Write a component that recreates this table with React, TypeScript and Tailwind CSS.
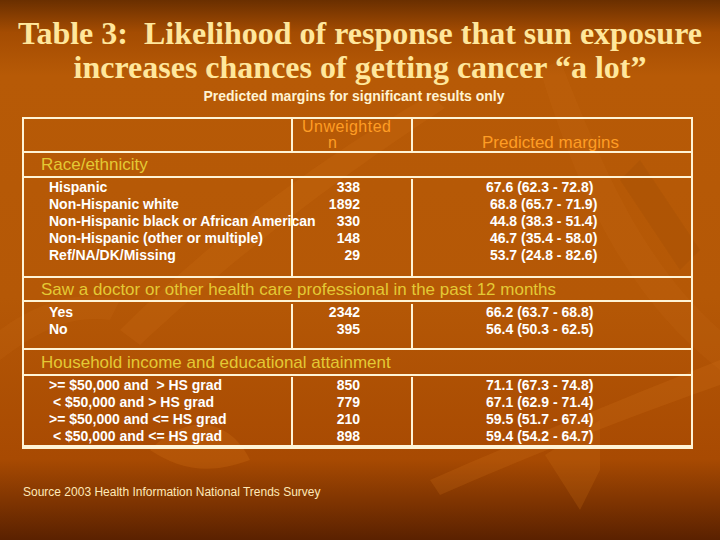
import React from 'react';

type Row = { label: string; n: string; margin: string };

const race: Row[] = [
  { label: 'Hispanic', n: '338', margin: '67.6 (62.3 - 72.8)' },
  { label: 'Non-Hispanic white', n: '1892', margin: ' 68.8 (65.7 - 71.9)' },
  { label: 'Non-Hispanic black or African American', n: '330', margin: ' 44.8 (38.3 - 51.4)' },
  { label: 'Non-Hispanic (other or multiple)', n: '148', margin: ' 46.7 (35.4 - 58.0)' },
  { label: 'Ref/NA/DK/Missing', n: '29', margin: ' 53.7 (24.8 - 82.6)' },
];

const doctor: Row[] = [
  { label: 'Yes', n: '2342', margin: '66.2 (63.7 - 68.8)' },
  { label: 'No', n: '395', margin: '56.4 (50.3 - 62.5)' },
];

const income: Row[] = [
  { label: '>= $50,000 and  > HS grad', n: '850', margin: '71.1 (67.3 - 74.8)' },
  { label: ' < $50,000 and > HS grad', n: '779', margin: '67.1 (62.9 - 71.4)' },
  { label: '>= $50,000 and <= HS grad', n: '210', margin: '59.5 (51.7 - 67.4)' },
  { label: ' < $50,000 and <= HS grad', n: '898', margin: '59.4 (54.2 - 64.7)' },
];

const Section: React.FC<{ title: string; className: string }> = ({ title, className }) => (
  <div className={`flex items-center pl-[17px] border-b-2 border-[#fff4d6] text-[17px] leading-[19px] text-[#e4c934] ${className}`}>
    {title}
  </div>
);

const DataBlock: React.FC<{ rows: Row[]; className: string }> = ({ rows, className }) => (
  <div className={`grid grid-cols-[267px_120px_1fr] border-b-2 border-[#fff4d6] text-white font-bold text-[14px] leading-[17px] ${className}`}>
    <div className="pl-[25px] whitespace-pre">
      {rows.map((r) => (
        <div key={r.label}>{r.label}</div>
      ))}
    </div>
    <div className="border-l-2 border-[#fff4d6] pr-[51px] text-right">
      {rows.map((r) => (
        <div key={r.label}>{r.n}</div>
      ))}
    </div>
    <div className="border-l-2 border-[#fff4d6] pl-[73px] whitespace-pre">
      {rows.map((r) => (
        <div key={r.label}>{r.margin}</div>
      ))}
    </div>
  </div>
);

const Backdrop: React.FC = () => (
  <svg className="absolute inset-0" width="720" height="540" viewBox="0 0 720 540">
    <path d="M120 330 C200 250 300 170 430 95 L445 108 C320 190 220 270 140 345 Z" fill="#d0721a" opacity="0.18" />
    <path d="M560 60 C600 160 640 260 720 330 L720 370 C630 300 580 200 540 70 Z" fill="#d0721a" opacity="0.14" />
    <path d="M430 480 C520 440 620 400 720 360 L720 385 C620 420 520 460 440 495 Z" fill="#d67a1c" opacity="0.2" />
    <path d="M150 450 C190 410 230 420 250 460 C210 475 180 470 150 450 Z" fill="#cc6e14" opacity="0.3" />
    <path d="M600 470 L580 510 L545 455 L600 420 Z" fill="#c86c14" opacity="0.25" />
    <path d="M620 180 L680 270 L700 250 L640 160 Z" fill="#8f4000" opacity="0.15" />
    <path d="M0 330 C40 300 80 290 120 300 L110 320 C70 315 40 330 0 360 Z" fill="#d0721a" opacity="0.15" />
  </svg>
);

export default function App() {
  return (
    <div
      className="relative w-[720px] h-[540px] overflow-hidden bg-[linear-gradient(180deg,#6a2f00_0%,#a44c02_6%,#b75a06_14%,#b55806_55%,#a84a02_85%,#5a2100_100%)]"
      style={{ fontFamily: '"Liberation Sans", Arial, sans-serif' }}
    >
      <Backdrop />
      <div className="relative">
        <h1
          className="pt-[16px] text-center text-[32px] leading-[34px] font-bold text-[#ffe79c]"
          style={{ fontFamily: '"Liberation Serif", "Times New Roman", serif' }}
        >
          Table 3:&nbsp; Likelihood of response that sun exposure
          <br />
          increases chances of getting cancer “a lot”
        </h1>
        <p className="mt-[4px] pr-[12px] text-center text-[14px] leading-[16px] font-bold text-[#fff3d2]">
          Predicted margins for significant results only
        </p>
        <div className="mt-[13px] ml-[22px] w-[671px] border-2 border-[#fff4d6]">
          <div className="grid grid-cols-[267px_120px_1fr] h-[34px] border-b-2 border-[#fff4d6] text-[#ff9d24]">
            <div />
            <div className="border-l-2 border-[#fff4d6] pl-[9px] text-[16px] leading-[16px] tracking-[0.5px]">
              <div>Unweighted</div>
              <div className="pl-[26px]">n</div>
            </div>
            <div className="border-l-2 border-[#fff4d6] pl-[69px] pb-[1px] flex items-end text-[17px] leading-[15px]">
              Predicted margins
            </div>
          </div>
          <Section title="Race/ethnicity" className="h-[25px]" />
          <DataBlock rows={race} className="h-[100px] pt-[1px]" />
          <Section title="Saw a doctor or other health care professional in the past 12 months" className="h-[24px]" />
          <DataBlock rows={doctor} className="h-[48px] pt-[2px]" />
          <Section title="Household income and educational attainment" className="h-[26px]" />
          <DataBlock rows={income} className="h-[71px] pt-[1px]" />
        </div>
        <p className="mt-[36px] ml-[23px] text-[12px] leading-[14px] text-[#ffe9b8]">
          Source 2003 Health Information National Trends Survey
        </p>
      </div>
    </div>
  );
}
